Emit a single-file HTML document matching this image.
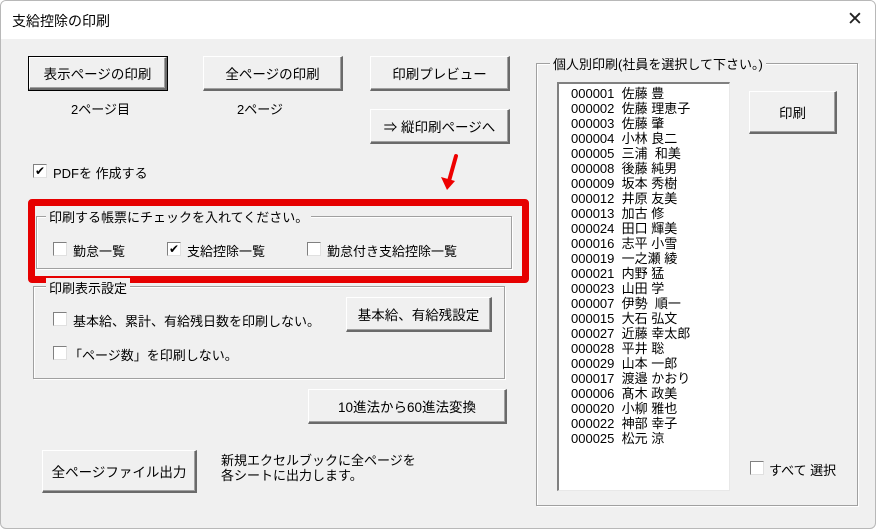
<!DOCTYPE html>
<html><head><meta charset="utf-8"><style>
body{margin:0;width:876px;height:529px;overflow:hidden;background:#fff;font-family:"Liberation Sans","Noto Sans CJK JP",sans-serif;font-size:13px;color:#000}
.win{position:absolute;left:0;top:0;width:874px;height:527px;border:1px solid #b8b8b8;border-radius:6px;background:#f0f0f0;overflow:hidden}
.title{position:absolute;left:0;top:0;width:874px;height:38px;background:#fff}
.a{position:absolute;white-space:nowrap}
.btn{position:absolute;box-sizing:border-box;background:#f0f0f0;border-top:1px solid #fff;border-left:1px solid #fff;border-right:2px solid #6a6a6a;border-bottom:2px solid #6a6a6a;box-shadow:inset -1px -1px 0 #a0a0a0;display:flex;align-items:center;justify-content:center;font-size:13.5px}
.def{outline:1px solid #000}
.cb{position:absolute;width:14px;height:14px;box-sizing:border-box;background:#fff;border-top:1px solid #808080;border-left:1px solid #808080;border-right:1px solid #e0e0e0;border-bottom:1px solid #e0e0e0;font-size:12px;line-height:12px;text-align:center}
.grp{position:absolute;box-sizing:border-box;border:1px solid #a0a0a0;box-shadow:1px 1px 0 #fff, inset 1px 1px 0 #fff}
.gt{position:absolute;background:#f0f0f0;padding:0 3px;font-size:13px;white-space:nowrap}
.list{position:absolute;left:556px;top:81px;width:173px;height:409px;box-sizing:border-box;background:#fff;border-top:2px solid #808080;border-left:2px solid #808080;border-right:1px solid #e8e8e8;border-bottom:1px solid #e8e8e8}
.list div{position:absolute;left:12px;font-size:13px;line-height:15px;white-space:pre}
</style></head><body>
<div class="win">
<div class="title"></div>
<div class="a" style="left:11px;top:10px;font-size:14px">支給控除の印刷</div>
<div class="a" style="left:846px;top:7px;font-size:19px;color:#222">✕</div>

<div class="btn def" style="left:28px;top:56px;width:138px;height:33px">表示ページの印刷</div>
<div class="btn" style="left:202px;top:55px;width:140px;height:35px">全ページの印刷</div>
<div class="btn" style="left:369px;top:55px;width:140px;height:35px">印刷プレビュー</div>
<div class="btn" style="left:369px;top:108px;width:140px;height:35px">⇒ 縦印刷ページへ</div>
<div class="a" style="left:70px;top:98px">2ページ目</div>
<div class="a" style="left:236px;top:98px">2ページ</div>

<div class="cb" style="left:32px;top:163px">✔</div>
<div class="a" style="left:52px;top:162px">PDFを 作成する</div>

<svg class="a" style="left:436px;top:152px" width="24" height="40" viewBox="0 0 24 40"><path d="M19 3 L12 28" stroke="#e00" stroke-width="4" stroke-linecap="round"/><path d="M4 24 L10 37 L18 28 Z" fill="#e00"/></svg>

<div class="a" style="left:27px;top:198px;width:487px;height:70px;border:7px solid #e60000;border-radius:4px"></div>
<div class="grp" style="left:35px;top:215px;width:476px;height:53px"></div>
<div class="gt" style="left:45px;top:206px">印刷する帳票にチェックを入れてください。</div>
<div class="cb" style="left:52px;top:241px"></div><div class="a" style="left:72px;top:240px">勤怠一覧</div>
<div class="cb" style="left:166px;top:241px">✔</div><div class="a" style="left:186px;top:240px">支給控除一覧</div>
<div class="cb" style="left:306px;top:241px"></div><div class="a" style="left:326px;top:240px">勤怠付き支給控除一覧</div>

<div class="grp" style="left:32px;top:285px;width:472px;height:93px"></div>
<div class="gt" style="left:45px;top:277px">印刷表示設定</div>
<div class="cb" style="left:52px;top:311px"></div><div class="a" style="left:72px;top:310px">基本給、累計、有給残日数を印刷しない。</div>
<div class="btn" style="left:345px;top:296px;width:146px;height:35px">基本給、有給残設定</div>
<div class="cb" style="left:52px;top:345px"></div><div class="a" style="left:68px;top:344px">「ページ数」を印刷しない。</div>

<div class="btn" style="left:307px;top:388px;width:199px;height:35px">10進法から60進法変換</div>
<div class="btn" style="left:41px;top:449px;width:155px;height:43px">全ページファイル出力</div>
<div class="a" style="left:220px;top:452px;line-height:15px">新規エクセルブックに全ページを<br>各シートに出力します。</div>

<div class="grp" style="left:535px;top:62px;width:322px;height:443px"></div>
<div class="gt" style="left:549px;top:53px">個人別印刷(社員を選択して下さい。)</div>
<div class="list">
<div style="top:2px">000001  佐藤 豊</div>
<div style="top:17px">000002  佐藤 理恵子</div>
<div style="top:32px">000003  佐藤 肇</div>
<div style="top:47px">000004  小林 良二</div>
<div style="top:62px">000005  三浦  和美</div>
<div style="top:77px">000008  後藤 純男</div>
<div style="top:92px">000009  坂本 秀樹</div>
<div style="top:107px">000012  井原 友美</div>
<div style="top:122px">000013  加古 修</div>
<div style="top:137px">000024  田口 輝美</div>
<div style="top:152px">000016  志平 小雪</div>
<div style="top:167px">000019  一之瀬 綾</div>
<div style="top:182px">000021  内野 猛</div>
<div style="top:197px">000023  山田 学</div>
<div style="top:212px">000007  伊勢  順一</div>
<div style="top:227px">000015  大石 弘文</div>
<div style="top:242px">000027  近藤 幸太郎</div>
<div style="top:257px">000028  平井 聡</div>
<div style="top:272px">000029  山本 一郎</div>
<div style="top:287px">000017  渡邉 かおり</div>
<div style="top:302px">000006  髙木 政美</div>
<div style="top:317px">000020  小柳 雅也</div>
<div style="top:332px">000022  神部 幸子</div>
<div style="top:347px">000025  松元 涼</div>
</div>
<div class="btn" style="left:748px;top:90px;width:88px;height:43px">印刷</div>
<div class="cb" style="left:749px;top:460px"></div><div class="a" style="left:768px;top:459px">すべて 選択</div>
</div>
</body></html>
